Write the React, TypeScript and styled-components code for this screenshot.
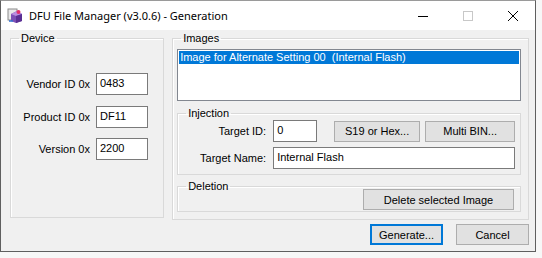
import React from "react";
import styled, { createGlobalStyle } from "styled-components";

const GlobalStyle = createGlobalStyle`
    html, body {
        margin: 0;
        padding: 0;
        background: #f7f7f7;
    }
    * {
        box-sizing: border-box;
    }
`;

const UI_FONT = `"Liberation Sans", Arial, sans-serif`;

const Window = styled.div`
    display: flex;
    flex-direction: column;
    width: 536px;
    height: 252px;
    border: 1px solid #5f5f5f;
    border-top-color: #9a9a9a;
    background: #f0f0f0;
    font-family: ${UI_FONT};
    font-size: 11px;
    color: #000;
`;

const TitleBar = styled.div`
    display: flex;
    align-items: center;
    height: 29px;
    flex-shrink: 0;
    background: #fff;
    padding-left: 6px;
`;

const TitleText = styled.span`
    flex: 1;
    margin-left: 6px;
    font-family: "Noto Sans", "Open Sans", sans-serif;
    font-size: 11px;
    color: #000;
    white-space: nowrap;
`;

const Caption = styled.div`
    display: flex;
    height: 100%;
`;

const CaptionButton = styled.div`
    display: flex;
    align-items: center;
    justify-content: center;
    width: 45px;
    height: 100%;
`;

const Body = styled.div`
    flex: 1;
    display: flex;
    flex-direction: column;
    padding: 2px 6px 0 9px;
`;

const TopRow = styled.div`
    display: flex;
    gap: 8px;
`;

const Group = styled.fieldset<{ $w?: number; $h: number }>`
    margin: 0;
    padding: 0 5px 0 4px;
    width: ${({ $w }) => ($w ? `${$w}px` : "auto")};
    height: ${({ $h }) => $h}px;
    border: 1px solid #d9d9d9;
    box-shadow: inset 1px 1px 0 #fff;
    min-width: 0;
`;

const Legend = styled.legend`
    padding: 0 2px;
    margin-left: 4px;
    font-size: 11px;
    line-height: 13px;
    color: #000;
`;

const DeviceForm = styled.div`
    display: grid;
    grid-template-columns: 75px 52px;
    column-gap: 6px;
    row-gap: 10.5px;
    align-items: center;
    margin-top: 28px;
`;

const Label = styled.label`
    text-align: right;
    white-space: nowrap;
`;

const TextBox = styled.div<{ $span?: boolean }>`
    grid-column: ${({ $span }) => ($span ? "2 / 4" : "auto")};
    width: 100%;
    height: 22px;
    border: 1px solid #7a7a7a;
    background: #fff;
    padding: 2px 3px;
    line-height: 14px;
    white-space: nowrap;
`;

const ListBox = styled.div`
    height: 52px;
    margin: 4px 2px 0 0;
    border: 1px solid #828790;
    background: #fff;
    padding: 1px;
`;

const ListItem = styled.div<{ $selected?: boolean }>`
    height: 13px;
    line-height: 13px;
    padding-left: 1px;
    background: ${({ $selected }) => ($selected ? "#0078d7" : "transparent")};
    color: ${({ $selected }) => ($selected ? "#fff" : "#000")};
    white-space: nowrap;
`;

const SubGroups = styled.div`
    display: flex;
    flex-direction: column;
    gap: 5px;
    margin-top: 6px;
    padding-right: 2px;
`;

const InjectionGrid = styled.div`
    display: grid;
    grid-template-columns: 84px 44px 1fr;
    column-gap: 7px;
    row-gap: 5px;
    align-items: center;
    padding: 0 3px 0 0;
`;

const InjectionButtons = styled.div`
    display: flex;
    gap: 5px;
    padding-left: 10px;
`;

const Button = styled.button<{ $w: number; $default?: boolean }>`
    width: ${({ $w }) => $w}px;
    height: 21px;
    padding: 0;
    font-family: ${UI_FONT};
    font-size: 11px;
    color: #000;
    background: #e1e1e1;
    border: ${({ $default }) =>
        $default ? "2px solid #0078d7" : "1px solid #adadad"};
    border-radius: 0;
`;

const DeletionRow = styled.div`
    display: flex;
    justify-content: flex-end;
    margin-top: -4px;
    padding-right: 1px;
`;

const Footer = styled.div`
    display: flex;
    justify-content: flex-end;
    gap: 13px;
    margin-top: 4px;
`;

const TitleIcon = () => (
    <svg width="16" height="16" viewBox="0 0 16 16">
        <rect x="1" y="1" width="9" height="11" fill="#e8e8e8" stroke="#8a8a8a" />
        <path d="M4 6 L10 3 L15 6 L15 13 L9 15 L4 13 Z" fill="#7b4fb5" />
        <path d="M4 6 L9 8 L15 6 L10 3 Z" fill="#b98ee0" />
        <path d="M9 8 L15 6 L15 13 L9 15 Z" fill="#5a2f93" />
        <circle cx="11.5" cy="4" r="2" fill="#e0306a" />
        <path d="M2 13 L6 13" stroke="#2f6fd0" strokeWidth="1.5" />
    </svg>
);

const App = () => {
    return (
        <>
            <GlobalStyle />
            <Window>
                <TitleBar>
                    <TitleIcon />
                    <TitleText>DFU File Manager (v3.0.6) - Generation</TitleText>
                    <Caption>
                        <CaptionButton>
                            <svg width="10" height="10" viewBox="0 0 10 10">
                                <path d="M0 5.5 H10" stroke="#000" strokeWidth="1" />
                            </svg>
                        </CaptionButton>
                        <CaptionButton>
                            <svg width="10" height="10" viewBox="0 0 10 10">
                                <rect x="0.5" y="0.5" width="9" height="9" fill="none" stroke="#c8c8c8" />
                            </svg>
                        </CaptionButton>
                        <CaptionButton>
                            <svg width="10" height="10" viewBox="0 0 10 10">
                                <path d="M0 0 L10 10 M10 0 L0 10" stroke="#000" strokeWidth="1" />
                            </svg>
                        </CaptionButton>
                    </Caption>
                </TitleBar>
                <Body>
                    <TopRow>
                        <Group $w={155} $h={186}>
                            <Legend>Device</Legend>
                            <DeviceForm>
                                <Label>Vendor ID 0x</Label>
                                <TextBox>0483</TextBox>
                                <Label>Product ID 0x</Label>
                                <TextBox>DF11</TextBox>
                                <Label>Version 0x</Label>
                                <TextBox>2200</TextBox>
                            </DeviceForm>
                        </Group>
                        <Group $w={359} $h={188}>
                            <Legend>Images</Legend>
                            <ListBox>
                                <ListItem $selected>
                                    Image for Alternate Setting 00&nbsp;&nbsp;(Internal Flash)
                                </ListItem>
                            </ListBox>
                            <SubGroups>
                                <Group $h={68}>
                                    <Legend>Injection</Legend>
                                    <InjectionGrid>
                                        <Label>Target ID:</Label>
                                        <TextBox>0</TextBox>
                                        <InjectionButtons>
                                            <Button $w={86}>S19 or Hex...</Button>
                                            <Button $w={90}>Multi BIN...</Button>
                                        </InjectionButtons>
                                        <Label>Target Name:</Label>
                                        <TextBox $span>Internal Flash</TextBox>
                                    </InjectionGrid>
                                </Group>
                                <Group $h={32}>
                                    <Legend>Deletion</Legend>
                                    <DeletionRow>
                                        <Button $w={151}>Delete selected Image</Button>
                                    </DeletionRow>
                                </Group>
                            </SubGroups>
                        </Group>
                    </TopRow>
                    <Footer>
                        <Button $w={73} $default>
                            Generate...
                        </Button>
                        <Button $w={73}>Cancel</Button>
                    </Footer>
                </Body>
            </Window>
        </>
    );
};

export default App;
